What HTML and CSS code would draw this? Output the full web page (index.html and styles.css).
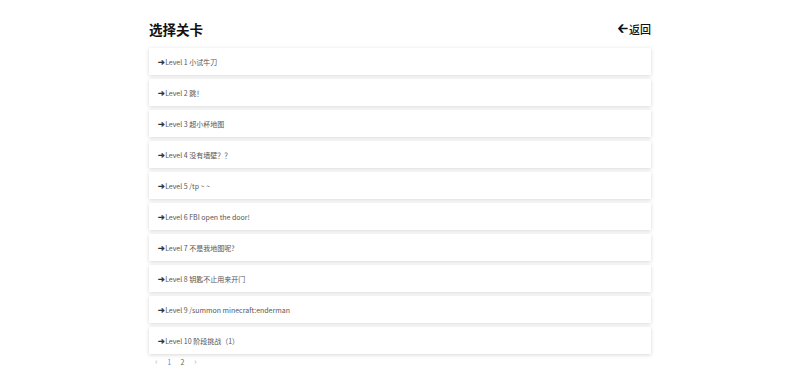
FILE: index.html
```html
<!DOCTYPE html>
<html lang="zh">

<head>
  <meta charset="UTF-8">
  <meta name="viewport" content="width=device-width, initial-scale=1.0">
  <title>选择关卡</title>
  <link rel="stylesheet" href="styles.css">
</head>

<body>
  <div class="page">
    <div class="header">
      <h2>选择关卡</h2>
      <a class="back" href="#"><span class="arrow">&#129120;</span>返回</a>
    </div>
    <ul class="levels">
      <li class="level"><span class="go">&#10140;</span>Level 1 小试牛刀</li>
      <li class="level"><span class="go">&#10140;</span>Level 2 跳！</li>
      <li class="level"><span class="go">&#10140;</span>Level 3 超小杯地图</li>
      <li class="level"><span class="go">&#10140;</span>Level 4 没有墙壁？？</li>
      <li class="level"><span class="go">&#10140;</span>Level 5 /tp ~ ~</li>
      <li class="level"><span class="go">&#10140;</span>Level 6 FBI open the door!</li>
      <li class="level"><span class="go">&#10140;</span>Level 7 不是我地图呢?</li>
      <li class="level"><span class="go">&#10140;</span>Level 8 钥匙不止用来开门</li>
      <li class="level"><span class="go">&#10140;</span>Level 9 /summon minecraft:enderman</li>
      <li class="level"><span class="go">&#10140;</span>Level 10 阶段挑战（1）</li>
    </ul>
    <div class="pager">
      <span class="nav">&lsaquo;</span>
      <span class="num active">1</span>
      <span class="num">2</span>
      <span class="nav">&rsaquo;</span>
    </div>
  </div>
</body>

</html>
```

FILE: styles.css
```css
body {
  margin: 0;
  background: #fff;
  font-family: "Noto Sans CJK SC", "Noto Sans", sans-serif;
  color: #333;
}

.page {
  width: 502px;
  margin: 0 auto;
}

.header {
  display: flex;
  justify-content: space-between;
  align-items: center;
  height: 26px;
  padding-top: 16px;
  margin-bottom: 6px;
}

h2 {
  margin: 0;
  font-size: 13.5px;
  font-weight: 700;
  color: #111;
}

.back {
  display: flex;
  align-items: center;
  font-size: 11px;
  font-weight: 500;
  color: #111;
  text-decoration: none;
}

.back .arrow {
  font-family: "DejaVu Sans", sans-serif;
  font-size: 12px;
  font-weight: 700;
  margin-right: 1px;
  -webkit-text-stroke: 0.4px #111;
}

.levels {
  list-style: none;
  margin: 0;
  padding: 0;
  display: flex;
  flex-direction: column;
  gap: 4px;
}

.level {
  height: 27px;
  display: flex;
  align-items: center;
  padding: 0 9px;
  background: #fff;
  box-shadow: 0 1px 4px rgba(0, 0, 0, 0.16);
  font-size: 7px;
  color: #555;
}

.go {
  font-family: "DejaVu Sans", sans-serif;
  font-size: 8.5px;
  color: #333;
  -webkit-text-stroke: 0.3px #333;
}

.pager {
  display: flex;
  align-items: center;
  gap: 9.5px;
  padding: 1px 0 0 6px;
  font-size: 7px;
  color: #666;
}

.pager .nav {
  color: #bbb;
  font-size: 9px;
}

.pager .active {
  color: #4a90e2;
}
```
